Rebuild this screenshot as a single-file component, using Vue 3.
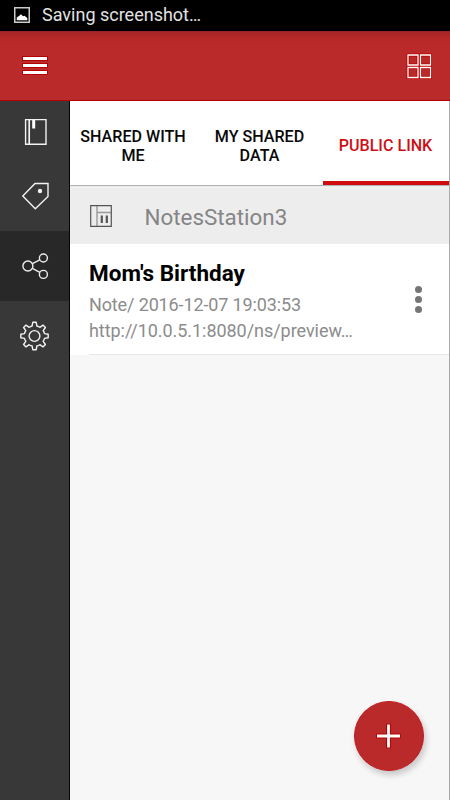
<script setup>
import { ref } from 'vue'

const tabs = ['SHARED WITH ME', 'MY SHARED DATA', 'PUBLIC LINK']
const activeTab = ref(2)
const activeSection = ref('share')
const note = {
  title: "Mom's Birthday",
  meta: 'Note/ 2016-12-07 19:03:53',
  link: 'http://10.0.5.1:8080/ns/preview…'
}
</script>

<template>
  <div class="screen">
    <div class="status">
      <svg class="picture" width="16" height="16" viewBox="0 0 16 16">
        <rect x=".75" y=".75" width="14.5" height="14.5" fill="none" stroke="#ccc" stroke-width="1.5" />
        <path d="M2.7 13.2V10.5L5 9L7 7.3L9 9.3L10.5 8.8L13.3 11V13.2Z" fill="#fff" />
      </svg>
      <span>Saving screenshot…</span>
    </div>

    <header class="bar">
      <button class="menu" aria-label="Menu"><i></i><i></i><i></i></button>
      <button class="grid" aria-label="Grid">
        <svg width="26" height="26" viewBox="0 0 26 26" fill="none">
          <g stroke="#b80000" stroke-width="3">
            <path d="M2 2H12V12H2ZM14.5 2H24.5V12H14.5ZM2 14.5H12V24.5H2ZM14.5 14.5H24.5V24.5H14.5Z" />
          </g>
          <g stroke="#fff" stroke-width="1.3">
            <path d="M2 2H12V12H2ZM14.5 2H24.5V12H14.5ZM2 14.5H12V24.5H2ZM14.5 14.5H24.5V24.5H14.5Z" />
          </g>
        </svg>
      </button>
    </header>

    <div class="body">
      <nav class="rail">
        <button class="item first" aria-label="Notebooks" @click="activeSection = 'book'">
          <svg width="30" height="30" viewBox="0 0 30 30" fill="none" stroke="#f2f2f2" stroke-width="1.4">
            <path d="M5.6 3.6H26V28.2H5.6Z" />
            <path d="M9.2 4V28" stroke-width="1.7" />
            <path d="M13.7 4V12.5" stroke-width="3" stroke="#fff" />
          </svg>
        </button>
        <button class="item second" aria-label="Tags" @click="activeSection = 'tag'">
          <svg width="30" height="30" viewBox="0 0 30 30" fill="none" stroke="#f2f2f2" stroke-width="1.4">
            <path d="M15 2.5H28V15.5L15.3 27.7L2.8 15Z" />
            <circle cx="20" cy="10" r="2.2" fill="#f2f2f2" stroke="none" />
          </svg>
        </button>
        <button class="item" :class="{ on: activeSection === 'share' }" aria-label="Shared" @click="activeSection = 'share'">
          <svg width="30" height="30" viewBox="0 0 30 30" fill="none" stroke="#eee" stroke-width="1.4">
            <circle cx="7.9" cy="15" r="5" />
            <circle cx="23.4" cy="7" r="4" />
            <circle cx="23.4" cy="23.4" r="4" />
            <path d="M12.4 12.6L19.8 8.8M12.4 17.4L19.8 21.4" />
          </svg>
        </button>
        <button class="item" aria-label="Settings" @click="activeSection = 'settings'">
          <svg width="30" height="30" viewBox="-14.5 -15 30 30" fill="none" stroke="#f2f2f2" stroke-width="1.4" stroke-linejoin="round">
            <path d="M-1.7 -13.7H1.7L2.4 -10Q4.3 -9.5 5.3 -8.7L8.5 -10.9L10.9 -8.5L8.7 -5.3Q9.5 -4.3 10 -2.4L13.7 -1.7V1.7L10 2.4Q9.5 4.3 8.7 5.3L10.9 8.5L8.5 10.9L5.3 8.7Q4.3 9.5 2.4 10L1.7 13.7H-1.7L-2.4 10Q-4.3 9.5 -5.3 8.7L-8.5 10.9L-10.9 8.5L-8.7 5.3Q-9.5 4.3 -10 2.4L-13.7 1.7V-1.7L-10 -2.4Q-9.5 -4.3 -8.7 -5.3L-10.9 -8.5L-8.5 -10.9L-5.3 -8.7Q-4.3 -9.5 -2.4 -10Z" />
            <circle r="5.4" />
          </svg>
        </button>
      </nav>

      <main class="content">
        <div class="tabs">
          <button v-for="(tab, i) in tabs" :key="tab" class="tab" :class="{ active: i === activeTab }" @click="activeTab = i">
            <span>{{ tab }}</span>
          </button>
        </div>

        <div class="group">
          <svg width="22" height="22" viewBox="0 0 22 22" fill="none">
            <path d="M7 1V21M7 7.5H21" stroke="#999" stroke-width="1.4" />
            <path d="M.7 .7H21.3V21.3H.7Z" stroke="#555" stroke-width="1.2" />
            <path d="M11.8 10.5V18M16.8 10.5V18" stroke="#555" stroke-width="2.2" />
          </svg>
          <span>NotesStation3</span>
        </div>

        <article class="note">
          <div class="text">
            <h2>{{ note.title }}</h2>
            <p class="meta">{{ note.meta }}</p>
            <p class="link">{{ note.link }}</p>
          </div>
          <button class="more" aria-label="More"><i></i><i></i><i></i></button>
        </article>
      </main>
    </div>

    <button class="fab" aria-label="Add">
      <svg width="26" height="26" viewBox="0 0 26 26">
        <path d="M12.5 .7V25.3M.2 13H24.8" stroke="#b80000" stroke-width="5" />
        <path d="M12.5 1.5V24.5M1 13H24" stroke="#fff" stroke-width="2.8" />
      </svg>
    </button>
  </div>
</template>

<style>
body { margin: 0; overflow: hidden; }
</style>

<style scoped>
* { box-sizing: border-box; }
button { border: 0; padding: 0; margin: 0; background: none; font: inherit; color: inherit; }
svg { display: block; }
.screen {
  position: relative;
  width: 450px;
  height: 800px;
  display: flex;
  flex-direction: column;
  overflow: hidden;
  background: #f7f7f7;
  font-family: Roboto, sans-serif;
}
.status {
  flex: none;
  height: 31px;
  display: flex;
  align-items: center;
  gap: 12px;
  padding-left: 14px;
  background: #000;
  color: #e2e2e2;
  font-size: 18px;
  line-height: 30px;
  white-space: nowrap;
}
.picture { margin-bottom: 1px; }
.status span { height: 31px; }
.bar {
  flex: none;
  height: 70px;
  display: flex;
  align-items: center;
  justify-content: space-between;
  padding: 0 18px 0 22px;
  background: linear-gradient(#8d1f1f 0, #a62525 1px, #b82828 8px, #ba2a2a 14px);
  border-bottom: 1px solid #b80000;
}
.menu { display: flex; flex-direction: column; gap: 2px; }
.menu i { width: 26px; height: 5px; background: #fff; border: 1px solid #b80000; }
.grid { margin-top: 1px; }
.body { flex: 1; display: flex; min-height: 0; }
.rail {
  flex: none;
  width: 70px;
  background: #383838;
  border-right: 1px solid #060606;
}
.item {
  width: 100%;
  height: 70px;
  display: flex;
  align-items: center;
  justify-content: center;
}
.item.first { height: 60px; }
.item.on { background: #282828; }
.content { flex: 1; min-width: 0; border-right: 1px solid #aaa; }
.tabs {
  height: 85px;
  display: grid;
  grid-template-columns: 127px 126px 126px;
  background: #fff;
  border-bottom: 1px solid #b3b3b3;
}
.tab {
  display: flex;
  align-items: center;
  justify-content: center;
  padding: 5px 8px 0 7px;
  color: #080808;
  font-size: 16.1px;
  font-weight: 500;
  line-height: 19px;
  text-align: center;
}
.tab.active {
  color: #cd1016;
  padding-top: 8px;
  border-bottom: 4px solid #cf0b10;
}
.group {
  height: 58px;
  display: flex;
  align-items: center;
  gap: 33px;
  padding: 2px 0 0 20px;
  background: linear-gradient(#e2e2e2 0, #f3f3f3 1px, #ededed 3px);
  color: #858585;
  font-size: 22.4px;
  line-height: 30px;
}
.group svg { margin-left: -.5px; }
.group span { padding-top: 2px; }
.note {
  height: 111px;
  display: flex;
  justify-content: space-between;
  background: #fff;
  padding: 0 27px 0 19px;
  background-image: linear-gradient(#e8e8e8, #e8e8e8);
  background-size: 360px 1px;
  background-position: 19px 110px;
  background-repeat: no-repeat;
}
.text { white-space: nowrap; }
h2 {
  margin: 15px 0 0;
  color: #000;
  font-size: 22.5px;
  line-height: 28px;
  font-weight: 700;
}
p { margin: 0; color: #8c8c8c; font-size: 18px; line-height: 26px; }
.meta { margin-top: 5px; letter-spacing: -.13px; }
.link { letter-spacing: -.05px; }
.more { align-self: center; display: flex; flex-direction: column; gap: 3px; }
.more i { width: 7px; height: 7px; border-radius: 50%; background: #757575; }
.fab {
  position: absolute;
  left: 354px;
  top: 701px;
  width: 70px;
  height: 70px;
  display: flex;
  align-items: center;
  justify-content: center;
  border-radius: 50%;
  background: #ba2a2a;
  border: 1px solid #c41a1f;
  box-shadow: 2px 4px 6px rgba(0, 0, 0, .2);
}
</style>
